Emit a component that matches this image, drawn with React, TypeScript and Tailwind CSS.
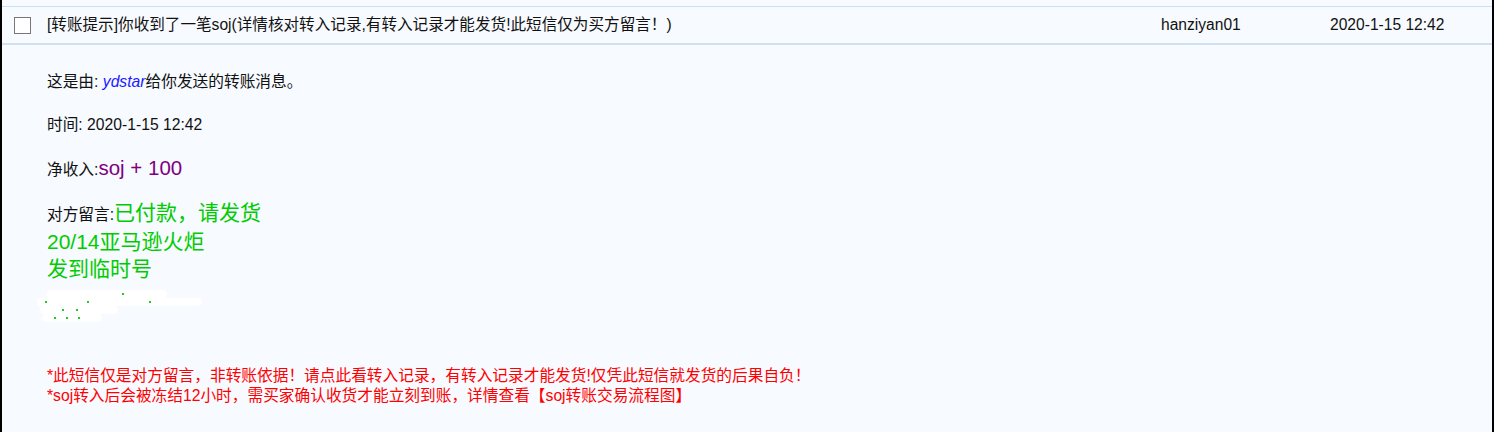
const dot = "w-[2px] h-[2px] bg-[#22cc22]";

function Bar({ w, ml, dots }: { w: string; ml: string; dots: string[] }) {
  return (
    <div className={`${w} ${ml} h-[8px] bg-white rounded-full flex items-center`}>
      {dots.map((d, i) => (
        <span key={i} className={`${d} ${dot}`} />
      ))}
    </div>
  );
}

export default function App() {
  const font = { fontFamily: '"Liberation Sans", Arial, "Noto Sans CJK SC", sans-serif' };
  return (
    <div className="w-[1494px] h-[432px] bg-[#f7faff] overflow-hidden border-l-2 border-r-2 border-black" style={font}>
      <div className="h-[6px]" />
      <div className="flex items-center h-[39px] border-t border-b-2 border-[#cfe0f0] text-[15.6px] text-[#111]">
        <div className="w-[45px] flex justify-start pl-[12px]">
          <div className="w-[17px] h-[17px] border-[1.5px] border-[#777] bg-white" />
        </div>
        <div className="flex-1">[转账提示]你收到了一笔soj(详情核对转入记录,有转入记录才能发货!此短信仅为买方留言！)</div>
        <div className="w-[169px]">hanziyan01</div>
        <div className="w-[162px]">2020-1-15 12:42</div>
      </div>
      <div className="pl-[45px] pt-[27px] text-[15.7px] text-[#111]">
        <div className="leading-[20px]">
          这是由: <span className="italic text-[#1a1aff]">ydstar</span>给你发送的转账消息。
        </div>
        <div className="leading-[20px] mt-[23px]">时间: 2020-1-15 12:42</div>
        <div className="leading-[24px] mt-[21px] flex items-baseline">
          <span>净收入:</span>
          <span className="text-[20.5px] text-[#800080]">soj + 100</span>
        </div>
        <div className="mt-[17px] text-[21px] leading-[27px] text-[#00cc00]">
          <div className="flex items-baseline">
            <span className="text-[15.7px] text-[#111]">对方留言:</span>
            <span>已付款，请发货</span>
          </div>
          <div>20/14亚马逊火炬</div>
          <div>发到临时号</div>
        </div>
        <div className="flex flex-col items-start pt-[8px] -ml-[10px]">
          <Bar w="w-[120px]" ml="ml-[10px]" dots={["ml-[75px]"]} />
          <Bar w="w-[165px]" ml="ml-[0px]" dots={["ml-[8px]", "ml-[40px]", "ml-[60px]"]} />
          <Bar w="w-[78px]" ml="ml-[3px]" dots={["ml-[22px]", "ml-[12px]"]} />
          <Bar w="w-[60px]" ml="ml-[5px]" dots={["ml-[12px]", "ml-[10px]", "ml-[10px]"]} />
        </div>
        <div className="mt-[44px] leading-[20px] text-[#ff0000]">
          <div>*此短信仅是对方留言，非转账依据！请点此看转入记录，有转入记录才能发货!仅凭此短信就发货的后果自负！</div>
          <div>*soj转入后会被冻结12小时，需买家确认收货才能立刻到账，详情查看【soj转账交易流程图】</div>
        </div>
      </div>
    </div>
  );
}
